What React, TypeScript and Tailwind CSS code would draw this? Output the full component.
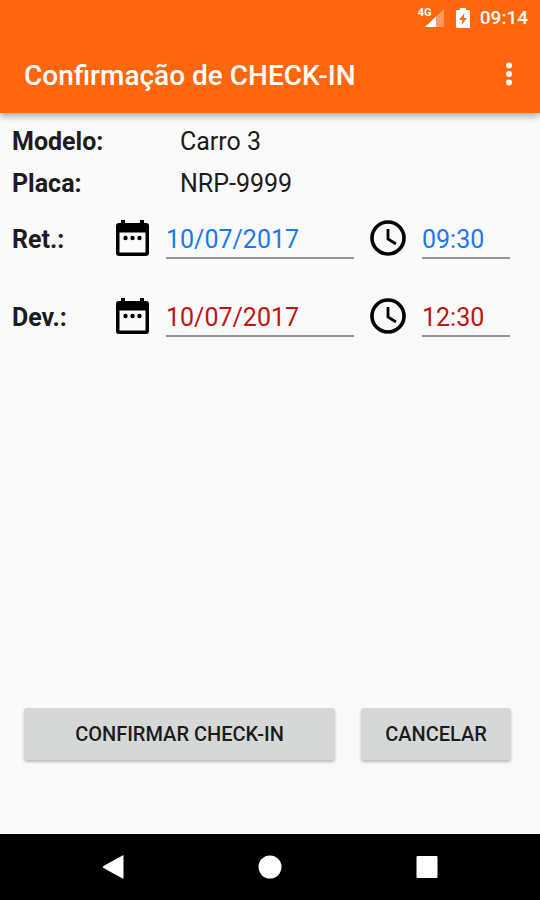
import React, { useState } from 'react';

interface Booking {
  id: string;
  label: string;
  date: string;
  time: string;
  color: string;
}

const BOOKINGS: Booking[] = [
  { id: 'ret', label: 'Ret.:', date: '10/07/2017', time: '09:30', color: 'text-[#1a78f0]' },
  { id: 'dev', label: 'Dev.:', date: '10/07/2017', time: '12:30', color: 'text-[#c01414]' },
];

const INPUT =
  'h-10 min-w-0 border-b-2 border-[#959595] bg-transparent pt-0.5 text-[25px] outline-none';

function CalendarIcon() {
  return (
    <svg viewBox="0 0 33 36" className="h-9 w-[33px]" aria-hidden="true">
      <path d="M5 0h4v3h15V0h4v3h2a3 3 0 0 1 3 3v27a3 3 0 0 1-3 3H3a3 3 0 0 1-3-3V6a3 3 0 0 1 3-3h2z" />
      <path d="M3.5 12.500h26V32.500h-26z" fill="#fafafa" />
      <circle cx="9.500" cy="18" r="2.200" />
      <circle cx="16.500" cy="18" r="2.200" />
      <circle cx="23.500" cy="18" r="2.200" />
    </svg>
  );
}

function ClockIcon() {
  return (
    <svg viewBox="0 0 36 36" className="h-9 w-9" fill="none" stroke="#000" aria-hidden="true">
      <circle cx="18" cy="18" r="16" strokeWidth="3.6" />
      <path d="M18 9v10l8 5" strokeWidth="2.8" />
    </svg>
  );
}

function StatusBar() {
  return (
    <div className="flex h-9 items-center justify-end pr-3 text-white">
      <div className="relative mr-3">
        <svg viewBox="0 0 20 18" className="h-[18px] w-5" fill="#fff" aria-hidden="true">
          <path d="M20 0v18H1z" opacity=".35" />
          <path d="M12 7.5V18H1z" />
        </svg>
        <span className="absolute -top-0.5 -left-1.5 text-[11px] leading-3 font-bold">4G</span>
      </div>
      <svg viewBox="0 0 14 20" className="mr-2.5 h-5 w-3.5" aria-hidden="true">
        <path d="M4 0h6v2h3a1 1 0 0 1 1 1v16a1 1 0 0 1-1 1H1a1 1 0 0 1-1-1V3a1 1 0 0 1 1-1h3z" fill="#fff" />
        <path d="M8.5 5 3 12h3.3L5.5 17 11 10H7.7z" fill="#ff660e" />
      </svg>
      <span className="text-[19px] font-medium">09:14</span>
    </div>
  );
}

function BookingRow({ booking }: { booking: Booking }) {
  const [date, setDate] = useState(booking.date);
  const [time, setTime] = useState(booking.time);

  return (
    <div className="flex h-10 items-center">
      <label htmlFor={`${booking.id}-date`} className="w-[104px] shrink-0 pt-0.5 text-[25px] font-bold">
        {booking.label}
      </label>
      <button type="button" aria-label="Escolher data" className="mr-[17px] mb-0.5 shrink-0">
        <CalendarIcon />
      </button>
      <input
        id={`${booking.id}-date`}
        type="text"
        value={date}
        onChange={e => setDate(e.target.value)}
        className={`${INPUT} flex-1 ${booking.color}`}
      />
      <button type="button" aria-label="Escolher hora" className="mx-4 mb-0.5 shrink-0">
        <ClockIcon />
      </button>
      <input
        type="text"
        aria-label={`${booking.label} hora`}
        value={time}
        onChange={e => setTime(e.target.value)}
        className={`${INPUT} w-[88px] ${booking.color}`}
      />
    </div>
  );
}

const ACTION =
  'h-[52px] rounded-[3px] bg-[#d6d8d7] text-[20px] font-medium text-[#1c1c1c] shadow-[0_2px_3px_rgba(0,0,0,0.25)]';

export default function App() {
  return (
    <div className="flex min-h-screen flex-col bg-[#fafafa] font-[Roboto,sans-serif] text-[#1c1c1c]">
      <header className="bg-[#ff660e] shadow-[0_3px_7px_rgba(0,0,0,0.35)]">
        <StatusBar />
        <div className="flex h-[77px] items-center justify-between pr-5 pl-6">
          <h1 className="pt-0.5 text-[28px] font-medium text-white">Confirmação de CHECK-IN</h1>
          <button type="button" aria-label="Mais opções" className="mb-0.5">
            <svg viewBox="0 0 22 24" className="h-6 w-[22px]" fill="#fff" aria-hidden="true">
              <circle cx="11" cy="3.500" r="3" />
              <circle cx="11" cy="12" r="3" />
              <circle cx="11" cy="20.500" r="3" />
            </svg>
          </button>
        </div>
      </header>

      <main className="flex flex-1 flex-col">
        <dl className="grid grid-cols-[168px_1fr] pt-2 pl-3 text-[25px] leading-[42px]">
          <dt className="font-bold">Modelo:</dt>
          <dd>Carro 3</dd>
          <dt className="font-bold">Placa:</dt>
          <dd>NRP-9999</dd>
        </dl>

        <div className="mt-3.5 flex flex-col gap-[38px] pr-[30px] pl-3">
          {BOOKINGS.map(booking => (
            <BookingRow key={booking.id} booking={booking} />
          ))}
        </div>

        {/* Actions */}
        <div className="mt-auto flex gap-[26px] pr-[29px] pb-[74px] pl-6">
          <button type="button" className={`${ACTION} flex-1`}>CONFIRMAR CHECK-IN</button>
          <button type="button" className={`${ACTION} w-[150px]`}>CANCELAR</button>
        </div>
      </main>

      {/* System navigation */}
      <nav className="flex h-[66px] items-center justify-center gap-[133px] bg-black">
        <button type="button" aria-label="Voltar">
          <svg viewBox="0 0 24 24" className="size-6" fill="#fff" aria-hidden="true">
            <path d="M21.500 0.500Q22.500 0 22.500 1v22q0 1-1 .5L2.500 13q-1.500-1 0-2z" />
          </svg>
        </button>
        <button type="button" aria-label="Início">
          <svg viewBox="0 0 24 24" className="size-6" fill="#fff" aria-hidden="true">
            <circle cx="12" cy="12" r="11.500" />
          </svg>
        </button>
        <button type="button" aria-label="Recentes">
          <svg viewBox="0 0 24 24" className="size-6" fill="#fff" aria-hidden="true">
            <rect x="1.500" y="1" width="21" height="22" rx="1" />
          </svg>
        </button>
      </nav>
    </div>
  );
}
